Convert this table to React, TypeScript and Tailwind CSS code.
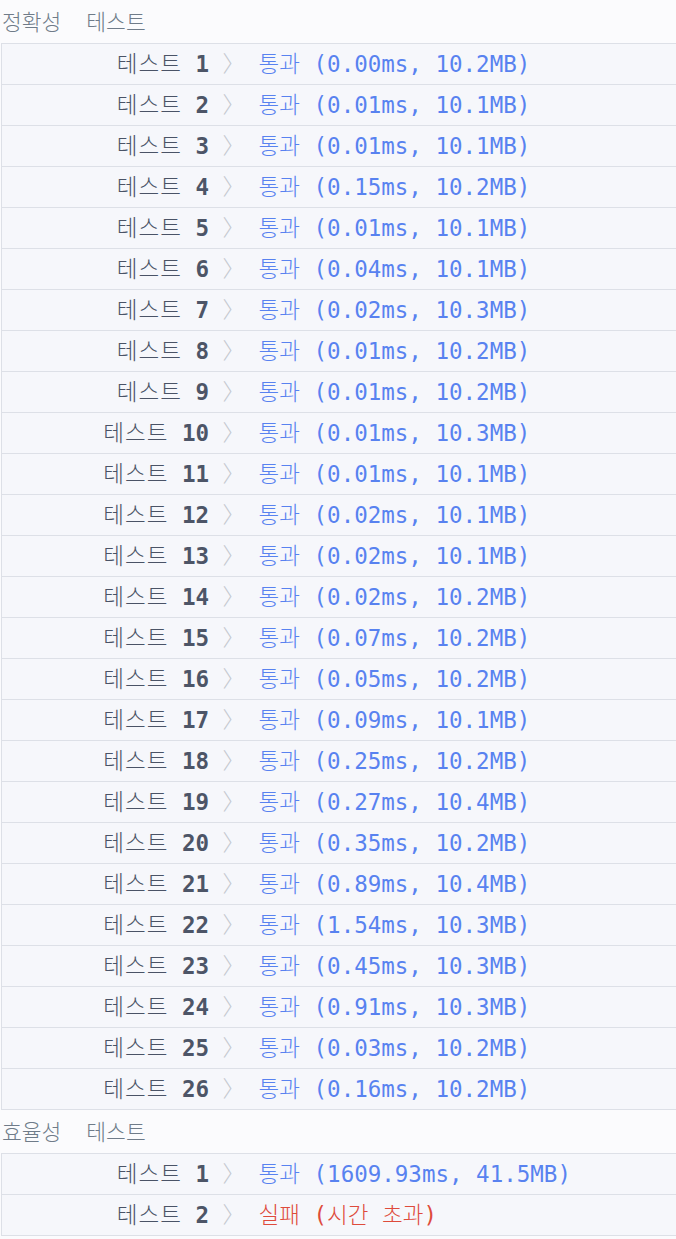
const accuracy: [number, string][] = [
  [1, "0.00ms, 10.2MB"],
  [2, "0.01ms, 10.1MB"],
  [3, "0.01ms, 10.1MB"],
  [4, "0.15ms, 10.2MB"],
  [5, "0.01ms, 10.1MB"],
  [6, "0.04ms, 10.1MB"],
  [7, "0.02ms, 10.3MB"],
  [8, "0.01ms, 10.2MB"],
  [9, "0.01ms, 10.2MB"],
  [10, "0.01ms, 10.3MB"],
  [11, "0.01ms, 10.1MB"],
  [12, "0.02ms, 10.1MB"],
  [13, "0.02ms, 10.1MB"],
  [14, "0.02ms, 10.2MB"],
  [15, "0.07ms, 10.2MB"],
  [16, "0.05ms, 10.2MB"],
  [17, "0.09ms, 10.1MB"],
  [18, "0.25ms, 10.2MB"],
  [19, "0.27ms, 10.4MB"],
  [20, "0.35ms, 10.2MB"],
  [21, "0.89ms, 10.4MB"],
  [22, "1.54ms, 10.3MB"],
  [23, "0.45ms, 10.3MB"],
  [24, "0.91ms, 10.3MB"],
  [25, "0.03ms, 10.2MB"],
  [26, "0.16ms, 10.2MB"],
]

const mono = "font-['DejaVu_Sans_Mono','Noto_Sans_CJK_KR',monospace]"

const ResultRow = ({ no, passed, detail }: { no: number; passed: boolean; detail: string }) => (
  <div className="h-[41px] flex items-center pt-px border-t border-[#dde0e7] bg-[#f6f7fb] whitespace-pre text-[22.5px]">
    <div className="w-[207px] shrink-0 text-right text-[#4a5366]">
      <span className="font-light tracking-[1px]">테스트</span> <span className="font-semibold text-[#4d5567]">{no}</span>
    </div>
    <span className="text-[#c4c8cf] font-light"> 〉 </span>
    {passed ? (
      <span className="text-[#5882f0]"><span className="font-light">통과</span> ({detail})</span>
    ) : (
      <span className="text-[#de4b3c] font-light">실패 (시간 초과)</span>
    )}
  </div>
)

const SectionTitle = ({ title }: { title: string }) => (
  <div className="h-[43px] flex items-center gap-[25px] pl-[2px] text-[21.5px] text-[#6f7b89] font-light font-['Noto_Sans_CJK_KR',sans-serif]">
    <span>{title}</span>
    <span>테스트</span>
  </div>
)

const App = () => {
  return (
    <section className="min-h-screen w-full bg-[#fbfbfd] overflow-hidden">
      <SectionTitle title="정확성" />
      <div className={`ml-px w-[720px] border-l border-b border-[#dde0e7] ${mono}`}>
        {accuracy.map(([no, detail]) => (
          <ResultRow key={no} no={no} passed detail={detail} />
        ))}
      </div>
      <SectionTitle title="효율성" />
      <div className={`ml-px w-[720px] border-l border-b border-[#dde0e7] ${mono}`}>
        <ResultRow no={1} passed detail="1609.93ms, 41.5MB" />
        <ResultRow no={2} passed={false} detail="" />
      </div>
    </section>
  )
}

export default App
